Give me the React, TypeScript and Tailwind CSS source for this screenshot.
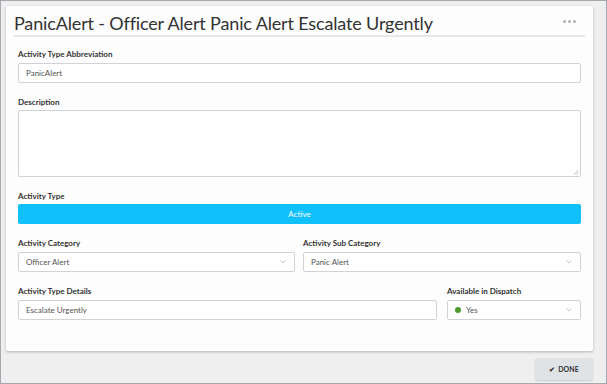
import React from "react";

// 작은 셀렉트 화살표
const Chevron = () => (
  <svg width="6" height="4" viewBox="0 0 6 4" className="shrink-0">
    <path d="M0.5 0.5 L3 3 L5.5 0.5" fill="none" stroke="#b5b5b5" strokeWidth="0.8" />
  </svg>
);

const Label = ({ children, tight }: { children: React.ReactNode; tight?: boolean }) => (
  <div className={`text-[8px] leading-[10px] font-bold text-[#333] whitespace-nowrap ${tight ? "mb-[3px]" : "mb-[4px]"}`}>
    {children}
  </div>
);

const TextBox = ({ value }: { value: string }) => (
  <div className="h-[20px] border border-[#cfd3d6] rounded-[2px] bg-white flex items-center px-[7px] text-[8px] text-[#555]">
    {value}
  </div>
);

const Select = ({ children }: { children: React.ReactNode }) => (
  <div className="h-[20px] border border-[#cfd3d6] rounded-[2px] bg-white flex items-center justify-between pl-[7px] pr-[8px] text-[8px] text-[#555]">
    <div className="flex items-center gap-[5px]">{children}</div>
    <Chevron />
  </div>
);

export default function App() {
  return (
    <div
      className="w-[607px] h-[384px] bg-[#efefef] border border-[#a3a9ae] flex flex-col"
      style={{ fontFamily: "Lato, 'Open Sans', sans-serif" }}
    >
      <div className="mt-[5px] ml-[5px] w-[587px] h-[345px] bg-[#fdfdfd] rounded-[2px] shadow-[0_1px_3px_rgba(0,0,0,0.25)] flex flex-col">
        {/* 헤더 */}
        <div className="px-[8px] pt-[4px]">
          <div className="flex items-center justify-between h-[27px] border-b-2 border-[#e8e8e8]">
            <h1 className="text-[18px] leading-[24px] text-[#333] tracking-[-0.15px]">
              PanicAlert - Officer Alert Panic Alert Escalate Urgently
            </h1>
            <div className="flex gap-[2px] mr-[9px] mb-[2px]">
              <span className="w-[3px] h-[3px] rounded-full bg-[#b0b0b0]" />
              <span className="w-[3px] h-[3px] rounded-full bg-[#b0b0b0]" />
              <span className="w-[3px] h-[3px] rounded-full bg-[#b0b0b0]" />
            </div>
          </div>
        </div>

        {/* 폼 */}
        <div className="px-[12px] pt-[12px] flex flex-col gap-[14px]">
          <div>
            <Label>Activity Type Abbreviation</Label>
            <TextBox value="PanicAlert" />
          </div>
          <div>
            <Label tight>Description</Label>
            <div className="relative h-[67px] border border-[#cfd3d6] rounded-[2px] bg-white">
              <svg width="6" height="6" viewBox="0 0 6 6" className="absolute right-[1px] bottom-[1px]">
                <path d="M5.5 1 L1 5.5 M5.5 3.5 L3.5 5.5" stroke="#999" strokeWidth="0.7" />
              </svg>
            </div>
          </div>
          <div>
            <Label tight>Activity Type</Label>
            <div className="h-[20px] bg-[#10c0fb] rounded-[2px] flex items-center justify-center text-[8px] text-white">
              Active
            </div>
          </div>
          <div className="flex gap-[8px]">
            <div className="w-[277px]">
              <Label>Activity Category</Label>
              <Select>Officer Alert</Select>
            </div>
            <div className="flex-1">
              <Label>Activity Sub Category</Label>
              <Select>Panic Alert</Select>
            </div>
          </div>
          <div className="flex gap-[10px]">
            <div className="w-[419px]">
              <Label>Activity Type Details</Label>
              <TextBox value="Escalate Urgently" />
            </div>
            <div className="flex-1">
              <Label>Available in Dispatch</Label>
              <Select>
                <span className="w-[6px] h-[6px] rounded-full bg-[#4a9a2c]" />
                <span>Yes</span>
              </Select>
            </div>
          </div>
        </div>
      </div>

      {/* 하단 버튼 */}
      <div className="flex justify-end pr-[13px] pt-[7px]">
        <button className="w-[58px] h-[22px] bg-[#dfe3e6] rounded-[2px] shadow-[0_1px_2px_rgba(0,0,0,0.15)] flex items-center justify-center gap-[3px] text-[7px] font-bold text-[#333]">
          <span className="text-[7px]">✔</span>
          <span>DONE</span>
        </button>
      </div>
    </div>
  );
}
